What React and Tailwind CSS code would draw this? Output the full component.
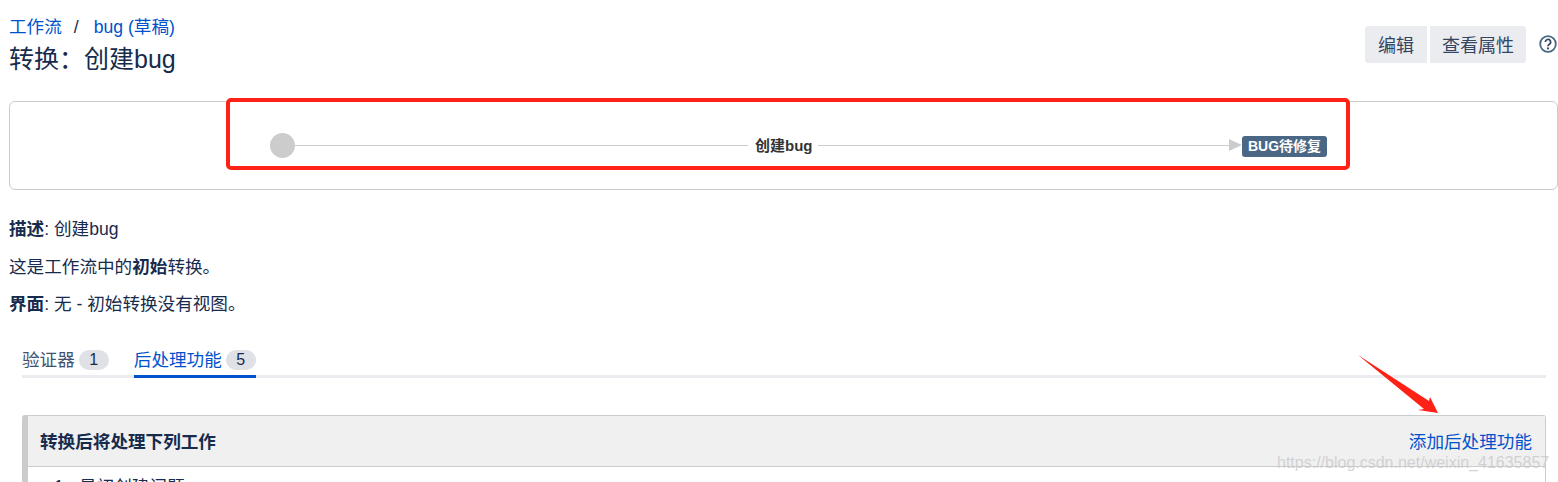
const cjk = "font-['Liberation_Sans','Noto_Sans_CJK_SC',sans-serif]";

function Badge({ children }) {
  return (
    <span className="ml-[4px] inline-flex h-[20px] w-[30px] items-center justify-center rounded-full bg-[#dfe1e6] text-[16px] text-[#172b4d]">
      {children}
    </span>
  );
}

export default function App() {
  return (
    <div className={`relative h-[482px] w-[1558px] overflow-hidden bg-white text-[17.6px] text-[#172b4d] ${cjk}`}>
      <div className="flex items-start justify-between pl-[9px] pr-[1px] pt-[15px]">
        <div>
          <div className="flex h-[24px] items-center text-[#0052cc]">
            <span>工作流</span>
            <span className="ml-[12px] mr-[15px] text-[#172b4d]">/</span>
            <span>bug (草稿)</span>
          </div>
          <h1 className="mt-[4px] text-[25px] leading-[32px] font-normal">转换：创建bug</h1>
        </div>
        <div className="mt-[11px] flex items-center">
          <button className="h-[37px] w-[62px] rounded-l-[3px] bg-[#ebecf0] pt-[3px] text-[18px] text-[#344563]">编辑</button>
          <button className="ml-[3px] h-[37px] w-[96px] rounded-r-[3px] bg-[#ebecf0] pt-[3px] text-[18px] text-[#344563]">查看属性</button>
          <svg className="ml-[13px] mb-[2px]" width="18" height="18" viewBox="0 0 18 18" fill="none">
            <circle cx="9" cy="9" r="7.8" stroke="#4a6785" strokeWidth="1.8" />
            <path d="M6.4 7.1a2.6 2.6 0 1 1 3.9 2.2c-.8.5-1.3 1-1.3 1.9" stroke="#344563" strokeWidth="1.7" />
            <circle cx="9" cy="13.4" r="1.1" fill="#344563" />
          </svg>
        </div>
      </div>

      <div className="ml-[9px] mt-[26px] flex h-[89px] w-[1549px] items-center rounded-[6px] border border-[#cccccc] pl-[260px] pr-[230px]">
        <div className="mt-[-1px] flex w-full items-center">
          <div className="h-[25px] w-[25px] shrink-0 rounded-full bg-[#cccccc]" />
          <div className="h-px w-[453px] shrink-0 bg-[#cccccc]" />
          <span className="ml-[7px] mr-[6px] mt-[3px] w-[57px] shrink-0 text-[15px] font-bold whitespace-nowrap text-[#333333]">创建bug</span>
          <div className="h-px flex-1 bg-[#cccccc]" />
          <div className="h-0 w-0 shrink-0 border-y-[6px] border-l-[13px] border-y-transparent border-l-[#cccccc]" />
          <span className="mt-[3px] flex h-[21px] w-[85px] shrink-0 items-center justify-center rounded-[3px] bg-[#4a6785] text-[14px] font-bold text-white">
            BUG待修复
          </span>
        </div>
      </div>

      <div className="pl-[9px] pt-[27px] leading-[24px]">
        <p>
          <b>描述</b>: 创建bug
        </p>
        <p className="mt-[14px]">
          这是工作流中的<b>初始</b>转换。
        </p>
        <p className="mt-[13px]">
          <b>界面</b>: 无 - 初始转换没有视图。
        </p>
      </div>

      <div className="ml-[22px] mr-[12px] mt-[30px] flex h-[32px] border-b-[3px] border-[#ebecf0]">
        <div className="flex h-[32px] items-center pb-[4px] text-[#42526e]">
          验证器<Badge>1</Badge>
        </div>
        <div className="ml-[25px] flex h-[32px] items-center border-b-[3px] border-[#0052cc] pb-[1px] text-[#0052cc]">
          后处理功能<Badge>5</Badge>
        </div>
      </div>

      <div className="ml-[22px] mr-[12px] mt-[37px] rounded-[3px] border border-l-[6px] border-[#cccccc]">
        <div className="flex h-[51px] items-center justify-between border-b border-[#cccccc] bg-[#f0f0f0] pl-[12px] pr-[13px] pt-[3px]">
          <span className="font-bold">转换后将处理下列工作</span>
          <span className="text-[#0052cc]">添加后处理功能</span>
        </div>
        <div className="flex h-[40px] pl-[26px] pt-[7px]">
          <span className="w-[25px]">1.</span>
          <span>最初创建问题。</span>
        </div>
      </div>

      {/* annotations drawn on top of the screenshot */}
      <div className="pointer-events-none absolute left-[226px] top-[98px] h-[72px] w-[1124px] rounded-[5px] border-[4px] border-[#ff2116]" />
      <svg className="pointer-events-none absolute left-[1350px] top-[350px]" width="100" height="70" viewBox="0 0 100 70">
        <path d="M8 5 L79 51 L80 47 L88 63 L68 60 L74 59 Z" fill="#ff2116" />
      </svg>
      <span className="pointer-events-none absolute left-[1277px] top-[451px] text-[16px] text-[#c9c9c9]/80">
        https://blog.csdn.net/weixin_41635857
      </span>
    </div>
  );
}
